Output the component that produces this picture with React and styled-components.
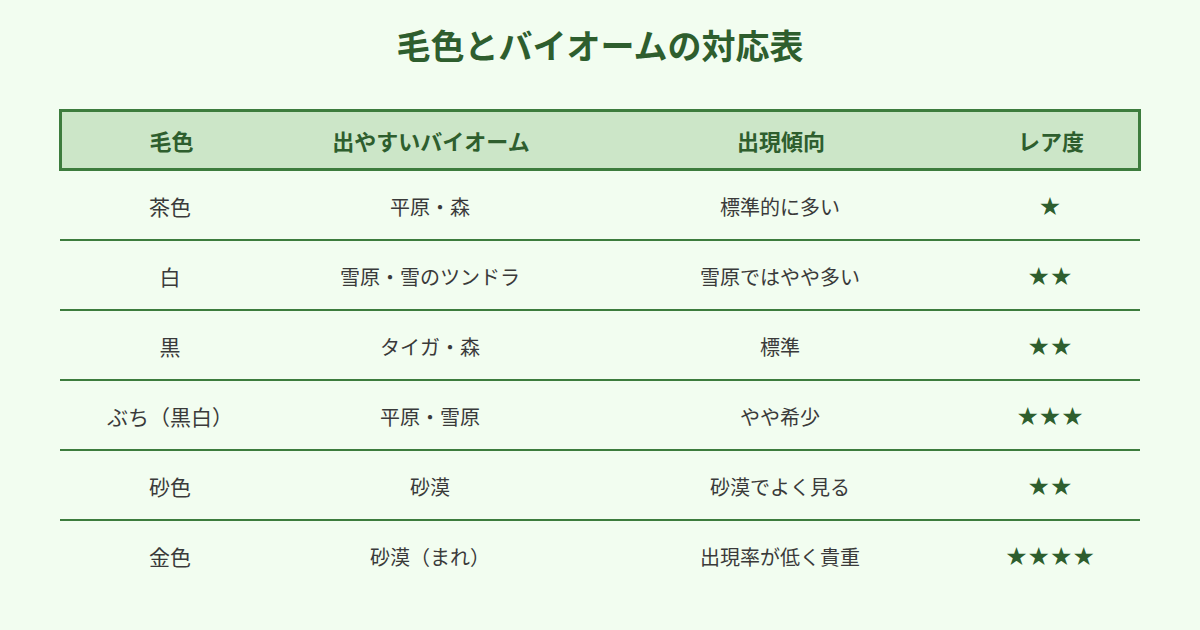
import React from 'react';
import styled, { createGlobalStyle } from 'styled-components';

const GlobalStyle = createGlobalStyle`
  html, body {
    margin: 0;
    padding: 0;
    background: #f2fdf0;
  }
  body {
    font-family: "Noto Sans CJK JP", "Noto Sans", sans-serif;
    color: #333;
  }
`

const Page = styled.div`
  width: 1200px;
  height: 630px;
  display: flex;
  flex-direction: column;
  align-items: center;
  background: #f2fdf0;
  box-sizing: border-box;
  padding-top: 20px;
`

const Title = styled.h1`
  margin: 0;
  font-size: 34px;
  line-height: 50px;
  font-weight: 700;
  color: #2e5e2e;
`

const Table = styled.div`
  width: 1082px;
  margin-top: 39px;
  display: flex;
  flex-direction: column;
`

const HeadRow = styled.div`
  display: grid;
  grid-template-columns: 219px 300px 400px 140px;
  padding-right: 17px;
  height: 62px;
  box-sizing: border-box;
  background: #cce6c8;
  border: 3px solid #3d7c3d;
  align-items: center;
`

const HeadCell = styled.div`
  text-align: center;
  font-size: 22px;
  font-weight: 700;
  color: #2e5e2e;
  white-space: nowrap;
`

const Row = styled.div`
  display: grid;
  grid-template-columns: 220px 300px 400px 140px;
  padding-right: 20px;
  margin: 0 1px;
  height: 70px;
  box-sizing: border-box;
  border-bottom: 2px solid ${props => props.last ? 'transparent' : '#3d7c3d'};
  align-items: center;
`

const Cell = styled.div`
  text-align: center;
  font-size: ${props => props.big ? '21px' : '20px'};
  color: #3a3a3a;
  white-space: nowrap;
  padding-top: 2px;
`

const Stars = styled.div`
  text-align: center;
  font-size: 25px;
  line-height: 30px;
  color: #2e5e2e;
  font-family: "DejaVu Sans", sans-serif;
  padding-top: 4px;
`

const data = [
  { color: '茶色', biome: '平原・森', trend: '標準的に多い', rare: 1 },
  { color: '白', biome: '雪原・雪のツンドラ', trend: '雪原ではやや多い', rare: 2 },
  { color: '黒', biome: 'タイガ・森', trend: '標準', rare: 2 },
  { color: 'ぶち（黒白）', biome: '平原・雪原', trend: 'やや希少', rare: 3 },
  { color: '砂色', biome: '砂漠', trend: '砂漠でよく見る', rare: 2 },
  { color: '金色', biome: '砂漠（まれ）', trend: '出現率が低く貴重', rare: 4 },
]

export default function App() {
  return (
    <>
      <GlobalStyle />
      <Page>
        <Title>毛色とバイオームの対応表</Title>
        <Table>
          <HeadRow>
            <HeadCell>毛色</HeadCell>
            <HeadCell>出やすいバイオーム</HeadCell>
            <HeadCell>出現傾向</HeadCell>
            <HeadCell>レア度</HeadCell>
          </HeadRow>
          {data.map((d, i) => (
            <Row key={i} last={i === data.length - 1}>
              <Cell big>{d.color}</Cell>
              <Cell>{d.biome}</Cell>
              <Cell>{d.trend}</Cell>
              <Stars>{'★'.repeat(d.rare)}</Stars>
            </Row>
          ))}
        </Table>
      </Page>
    </>
  )
}
